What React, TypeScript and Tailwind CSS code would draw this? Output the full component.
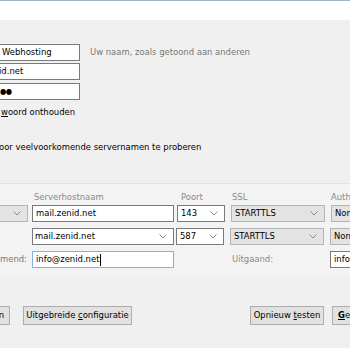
import React from "react";

function Chevron() {
  return (
    <svg width="8" height="5" viewBox="0 0 8 5" className="shrink-0">
      <path d="M0.5 0.5 L4 4 L7.5 0.5" fill="none" stroke="#8a8a8a" strokeWidth="1" />
    </svg>
  );
}

function TextBox({ value, className = "", caret }: { value: string; className?: string; caret?: boolean }) {
  return (
    <div className={`flex h-[17px] shrink-0 items-center overflow-hidden border bg-white px-[3px] ${className}`}>
      <span className="whitespace-nowrap">{value}</span>
      {caret && <span className="ml-[1px] h-[12px] w-px shrink-0 bg-black" />}
    </div>
  );
}

function Select({ value, className = "", gray }: { value: string; className?: string; gray?: boolean }) {
  return (
    <div
      className={`flex h-[17px] shrink-0 items-center justify-between border pl-[3px] pr-[6px] ${
        gray ? "border-[#b4b4b4] bg-[#e3e3e3]" : "border-[#7a7a7a] bg-white"
      } ${className}`}
    >
      <span className="whitespace-nowrap">{value}</span>
      <Chevron />
    </div>
  );
}

function Button({ children, className = "" }: { children: React.ReactNode; className?: string }) {
  return (
    <div
      className={`flex h-[19px] shrink-0 items-center justify-center whitespace-nowrap border border-[#adadad] bg-[#e1e1e1] px-[5px] ${className}`}
    >
      {children}
    </div>
  );
}

export default function App() {
  return (
    <div
      className="flex h-[348px] w-[350px] flex-col overflow-hidden bg-[#f0f0f0] text-[9.4px] text-black"
      style={{ fontFamily: '"DejaVu Sans Condensed", "Liberation Sans", sans-serif' }}
    >
      {/* header strip */}
      <div className="h-[20px] shrink-0 border-t border-[#a3b6ca] bg-white" />

      {/* identity fields */}
      <div className="mt-[24px] flex items-center">
        <TextBox value="Webhosting" className="-ml-[2px] w-[82px] border-[#7a7a7a]" />
        <span className="ml-[10px] shrink-0 whitespace-nowrap text-[#787878]">Uw naam, zoals getoond aan anderen</span>
      </div>
      <div className="mt-[2px] flex">
        <TextBox value="id.net" className="-ml-[2px] w-[82px] border-[#7a7a7a] !pl-0" />
      </div>
      <div className="mt-[3px] flex">
        <div className="-ml-[2px] flex h-[17px] w-[82px] shrink-0 items-center border border-[#7a7a7a] bg-white">
          <span className="ml-[1px] text-[8px] tracking-[-0.5px]">●●</span>
        </div>
      </div>
      <div className="mt-[4px] flex h-[16px] items-center whitespace-nowrap">
        <span className="ml-[1px]">
          <span className="underline">w</span>oord onthouden
        </span>
      </div>
      <div className="mt-[19px] flex h-[16px] items-center whitespace-nowrap">
        <span className="-ml-[1px]">oor veelvoorkomende servernamen te proberen</span>
      </div>

      {/* server table */}
      <div className="mt-[28px] flex h-[92px] shrink-0 flex-col border-t border-[#e2e2e2] bg-[#f3f3f3]">
        <div className="mt-[5px] flex h-[16px] items-center whitespace-nowrap text-[#8a8a8a]">
          <span className="ml-[34px] w-[147px] shrink-0">Serverhostnaam</span>
          <span className="w-[51px] shrink-0">Poort</span>
          <span className="w-[99px] shrink-0">SSL</span>
          <span className="shrink-0">Auth</span>
        </div>
        <div className="flex items-center">
          <Select value="" gray className="-ml-[4px] w-[32px]" />
          <TextBox value="mail.zenid.net" className="ml-[4px] w-[142px] border-[#7a7a7a]" />
          <Select value="143" className="ml-[3px] w-[48px]" />
          <Select value="STARTTLS" gray className="ml-[6px] w-[94px]" />
          <Select value="None" gray className="ml-[6px] w-[60px]" />
        </div>
        <div className="mt-[6px] flex items-center">
          <Select value="mail.zenid.net" className="ml-[32px] w-[142px] !pl-[2px]" />
          <Select value="587" className="ml-[2px] w-[48px]" />
          <Select value="STARTTLS" gray className="ml-[6px] w-[94px]" />
          <Select value="None" gray className="ml-[6px] w-[60px]" />
        </div>
        <div className="mt-[6px] flex items-center whitespace-nowrap">
          <span className="w-[32px] shrink-0 pr-[12px] text-right text-[#787878]">mend:</span>
          <TextBox value="info@zenid.net" caret className="w-[142px] border-[#7db3e6]" />
          <span className="ml-[58px] w-[98px] shrink-0 text-[#8a8a8a]">Uitgaand:</span>
          <TextBox value="info@zenid.net" className="w-[60px] border-[#7a7a7a]" />
        </div>
      </div>

      {/* buttons */}
      <div className="mt-[31px] flex items-center">
        <Button className="-ml-[40px] w-[50px] !justify-end">en</Button>
        <Button className="ml-[13px] w-[109px]">
          Uitgebreide&nbsp;<span className="underline">c</span>onfiguratie
        </Button>
        <Button className="ml-[118px] w-[74px]">
          Opnieuw&nbsp;<span className="underline">t</span>esten
        </Button>
        <Button className="ml-[8px] w-[60px] !justify-start">
          <span className="font-semibold underline">G</span>ereed
        </Button>
      </div>
    </div>
  );
}
